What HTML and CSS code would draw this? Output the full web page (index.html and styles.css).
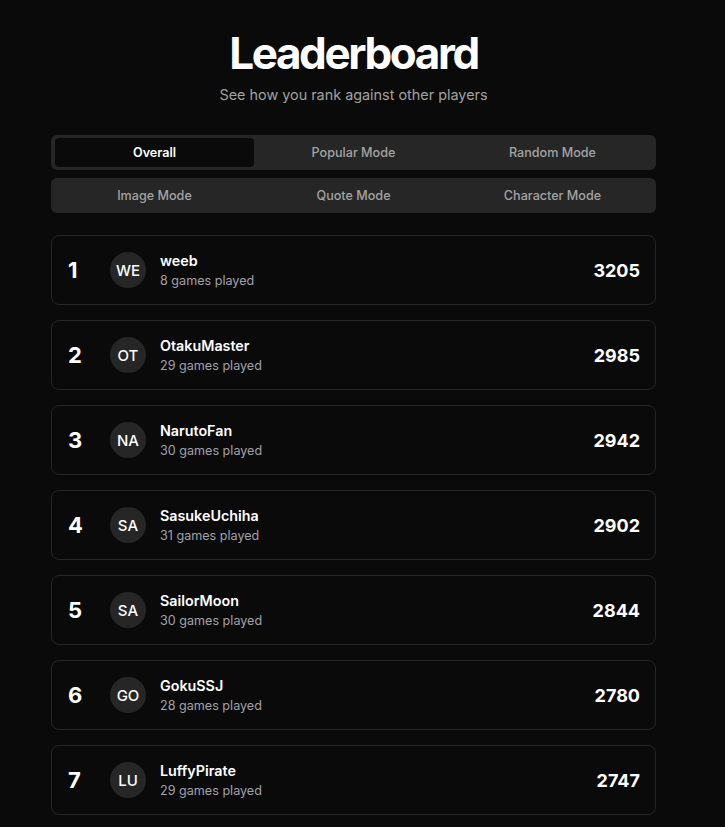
FILE: index.html
```html
<!DOCTYPE html>
<html lang="en">

<head>
  <meta charset="UTF-8">
  <meta name="viewport" content="width=device-width, initial-scale=1.0">
  <title>Leaderboard</title>
  <link rel="stylesheet" href="styles.css">
</head>

<body>

  <div class="wrap">
    <div class="head">
      <h1>Leaderboard</h1>
      <p>See how you rank against other players</p>
    </div>

    <div class="tabs">
      <div class="tab active">Overall</div>
      <div class="tab">Popular Mode</div>
      <div class="tab">Random Mode</div>
    </div>
    <div class="tabs">
      <div class="tab">Image Mode</div>
      <div class="tab">Quote Mode</div>
      <div class="tab">Character Mode</div>
    </div>

    <div class="list">
      <div class="row">
        <div class="rank">1</div>
        <div class="avatar">WE</div>
        <div class="info">
          <div class="name">weeb</div>
          <div class="games">8 games played</div>
        </div>
        <div class="score">3205</div>
      </div>
      <div class="row">
        <div class="rank">2</div>
        <div class="avatar">OT</div>
        <div class="info">
          <div class="name">OtakuMaster</div>
          <div class="games">29 games played</div>
        </div>
        <div class="score">2985</div>
      </div>
      <div class="row">
        <div class="rank">3</div>
        <div class="avatar">NA</div>
        <div class="info">
          <div class="name">NarutoFan</div>
          <div class="games">30 games played</div>
        </div>
        <div class="score">2942</div>
      </div>
      <div class="row">
        <div class="rank">4</div>
        <div class="avatar">SA</div>
        <div class="info">
          <div class="name">SasukeUchiha</div>
          <div class="games">31 games played</div>
        </div>
        <div class="score">2902</div>
      </div>
      <div class="row">
        <div class="rank">5</div>
        <div class="avatar">SA</div>
        <div class="info">
          <div class="name">SailorMoon</div>
          <div class="games">30 games played</div>
        </div>
        <div class="score">2844</div>
      </div>
      <div class="row">
        <div class="rank">6</div>
        <div class="avatar">GO</div>
        <div class="info">
          <div class="name">GokuSSJ</div>
          <div class="games">28 games played</div>
        </div>
        <div class="score">2780</div>
      </div>
      <div class="row">
        <div class="rank">7</div>
        <div class="avatar">LU</div>
        <div class="info">
          <div class="name">LuffyPirate</div>
          <div class="games">29 games played</div>
        </div>
        <div class="score">2747</div>
      </div>
    </div>
  </div>

</body>

</html>
```

FILE: styles.css
```css
body {
  margin: 0;
  background-color: #0a0a0a;
  color: #fff;
  font-family: Inter, "Noto Sans", sans-serif;
}

.wrap {
  width: 605px;
  margin-left: 51px;
  padding-top: 27px;
  padding-bottom: 24px;
}

.head {
  text-align: center;
  margin-bottom: 32px;
}

.head h1 {
  margin: 0;
  font-size: 44px;
  line-height: 52px;
  font-weight: 700;
  letter-spacing: -2.4px;
}

.head p {
  margin: 7px 0 0;
  font-size: 14.4px;
  color: #a1a1a1;
}

.tabs {
  display: grid;
  grid-template-columns: repeat(3, 1fr);
  padding: 3px 4px;
  height: 35px;
  box-sizing: border-box;
  background-color: #262626;
  border-radius: 6px;
  margin-bottom: 8px;
}

.tab {
  display: flex;
  align-items: center;
  justify-content: center;
  font-size: 12.6px;
  font-weight: 500;
  color: #a3a3a3;
  border-radius: 4px;
}

.tab.active {
  background-color: #0a0a0a;
  color: #fff;
  font-weight: 600;
}

.list {
  margin-top: 22px;
  display: flex;
  flex-direction: column;
  gap: 15px;
}

.row {
  display: flex;
  align-items: center;
  height: 70px;
  box-sizing: border-box;
  padding: 0 15px 0 16px;
  border: 1px solid #262626;
  border-radius: 8px;
}

.rank {
  width: 42px;
  font-size: 22px;
  font-weight: 700;
}

.avatar {
  width: 36px;
  height: 36px;
  border-radius: 50%;
  background-color: #262626;
  display: flex;
  align-items: center;
  justify-content: center;
  font-size: 15px;
  font-weight: 500;
  color: #fff;
  margin-right: 14px;
}

.info {
  flex: 1;
}

.name {
  font-size: 14.3px;
  font-weight: 600;
  line-height: 20px;
}

.games {
  font-size: 12.6px;
  color: #a1a1aa;
  line-height: 19px;
}

.score {
  font-size: 18px;
  font-weight: 700;
}
```
